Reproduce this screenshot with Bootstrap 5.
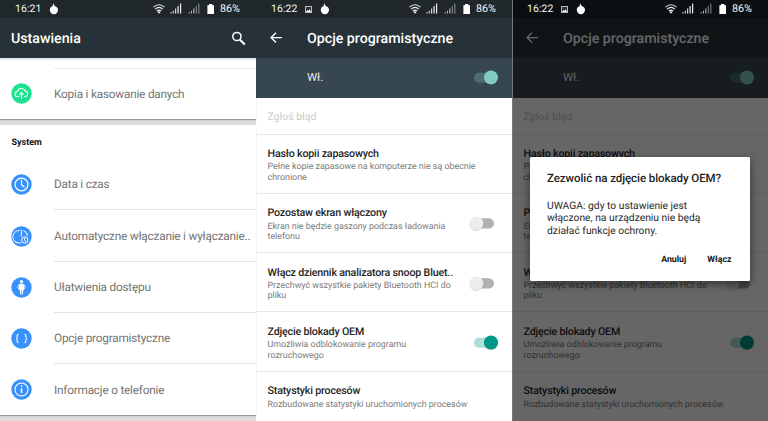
<!DOCTYPE html>
<html lang="pl">
<head>
<meta charset="utf-8">
<meta name="viewport" content="width=device-width, initial-scale=1">
<title>Ustawienia</title>
<link href="https://cdn.jsdelivr.net/npm/bootstrap@5.3.0/dist/css/bootstrap.min.css" rel="stylesheet">
<style>
body{width:768px;height:421px;overflow:hidden;font-family:Roboto,"Noto Sans",sans-serif;line-height:1;background:#fff;text-rendering:geometricPrecision}
symbol{overflow:visible}
.phone{width:256px;height:421px;flex:none}
.statusbar{height:18px;background:#20272b;color:#f4f4f4;font-size:10.8px;padding-left:15px;padding-right:16px;z-index:3}
.statusbar svg{display:block;flex:none}
.statusbar span{padding-top:1px}
.clock{width:26px;font-size:10.5px;letter-spacing:.05px}
.appbar{height:40px;background:#263238;color:#fff;padding:0 10px 0 11px;font-weight:500;font-size:14.2px}
.appbar span{padding-top:2px}
.phone-options .appbar{padding-left:13px}
.back{margin-right:24px}
.cards{background:#dcdcda;flex:1}
.sheet{background:#fff;box-shadow:0 1px 1px rgba(0,0,0,.3)}
.sheet-top{height:61px;padding-top:8px;border-top:2px solid #e8e8e8}
.sheet-system{height:290px;margin-top:6px}
.heading{height:34.3px;padding:14px 0 0 11.5px;font-size:9px;font-weight:700;color:#111}
.item{height:51.2px;padding-left:11px;color:#757575;font-size:11.8px;letter-spacing:-.21px}
.item svg{width:21px;height:21px;flex:none;margin-right:22px}
.item div{height:100%;border-bottom:1px solid #e4e4e4;white-space:nowrap;padding-top:2px}
.item:last-child div{border:0}
.sheet-top .item div{border-top:1px solid #ececec;border-bottom:0}
.master{height:39.5px;background:#37474f;color:#e9ecee;padding:0 14px 0 51px;font-size:11.4px}
.pref{height:59.3px;border-bottom:1px solid #e9e9e9;padding:13.6px 14px 0 11.5px}
.pref-off{height:37px;color:#cacaca;font-size:10.4px;padding:14px 0 0 11.5px}
.pref-title{font-size:10.7px;font-weight:500;line-height:12px;color:#262626;white-space:nowrap;letter-spacing:-.19px}
.pref-desc{font-size:8.9px;line-height:10.4px;color:#7b7b7b;white-space:nowrap;margin-top:2.4px}
.switch{width:25px;height:15px;flex:none}
.pref .switch{margin-top:9px}
.scrim{inset:0;background:rgba(0,0,0,.6);border-left:1px solid #777;z-index:2}
.prompt{left:18px;top:157px;width:220px;height:124px;background:#fff;border-radius:1.5px;z-index:4;padding:14px 18.5px 0 17px;box-shadow:0 3px 8px rgba(0,0,0,.5);color:#2a2a2a}
.prompt-title{font-size:11.5px;font-weight:500;line-height:14px;white-space:nowrap;color:#222;letter-spacing:-.07px}
.prompt-text{font-size:10.3px;line-height:12.3px;margin-top:15px;white-space:nowrap}
.prompt-actions{font-size:8.8px;font-weight:700;margin-top:19px;gap:21px;color:#151515}
.shade .statusbar{background:transparent}
</style>
<script src="https://cdn.jsdelivr.net/npm/bootstrap@5.3.0/dist/js/bootstrap.bundle.min.js"></script>
</head>
<body>
<svg width="0" height="0" class="position-absolute">
  <symbol id="drop" viewBox="0 0 10 12"><path d="M4 .3 5.7 2.9Q9 4 9 7.1A4.1 4.2 0 0 1 .8 7.1Q.8 4.2 3.7 3.1Z" fill="#fff"/></symbol>
  <symbol id="photo" viewBox="0 0 7 7"><rect x=".5" y=".5" width="6" height="6" fill="#333" stroke="#bbb"/><path d="m1 6 1.5-2 1 1 1.3-1.7L6 6Z" fill="#fff"/></symbol>
  <symbol id="signals" viewBox="0 0 63 12">
    <g fill="none" stroke="#eee" stroke-width="1.1"><path d="M.5 4.2Q6 -.7 11.5 4.2M2.1 6.1Q6 2.7 9.9 6.1M3.8 8Q6 6.2 8.2 8"/></g><path d="m4.5 9 1.5-1 1.5 1L6 10.7Z" fill="#eee"/>
    <g fill="#eee"><path d="M17.5 9h1v1.6h-1zM19.8 7.7h1v2.9h-1zM22.1 5.5h1.1v5.1h-1.1zM24.5 3h1.2v7.6h-1.2zM27 .5h1.2v10.1H27z"/></g>
    <g fill="#bbb"><path d="M35.7 9h1v1.6h-1zM38 7.7h1v2.9h-1zM40.3 5.5h1.1v5.1h-1.1z"/><path opacity=".6" d="M42.7 3h1.2v7.6h-1.2zM45.2 .5h1.2v10.1h-1.2z"/></g>
    <path fill="#fff" d="M54.4 2.2H56V1h3.3v1.2H61v8.8h-6.6z"/>
  </symbol>
  <symbol id="sw-on" viewBox="0 0 25 15"><rect x="1" y="2.7" width="20" height="10" rx="5" fill="#aadfda"/><circle cx="18" cy="8.2" r="7" fill="#000" opacity=".16"/><circle cx="18" cy="7.5" r="7" fill="#009688"/></symbol>
  <symbol id="sw-light" viewBox="0 0 25 15"><rect x="1" y="2.7" width="20" height="10" rx="5" fill="#4b6c70"/><circle cx="18" cy="8.2" r="7" fill="#000" opacity=".16"/><circle cx="18" cy="7.5" r="7" fill="#80cbc4"/></symbol>
  <symbol id="sw-off" viewBox="0 0 25 15"><rect x="1" y="2.2" width="20" height="10.4" rx="5.2" fill="#b0b0b0"/><circle cx="3.5" cy="8" r="7" fill="#000" opacity=".16"/><circle cx="3.5" cy="7.4" r="6.9" fill="#ececec"/></symbol>
</svg>

<main class="d-flex">
  <section class="phone d-flex flex-column">
    <div class="statusbar d-flex align-items-center">
      <span class="clock">16:21</span>
      <svg class="ms-2" width="10" height="12"><use href="#drop"/></svg>
      <svg class="ms-auto" width="63" height="12"><use href="#signals"/></svg>
      <span class="ms-1">86%</span>
    </div>
    <header class="appbar d-flex align-items-center justify-content-between">
      <span>Ustawienia</span>
      <svg width="15" height="15" viewBox="0 0 15 15" fill="none" stroke="#fff"><circle cx="5.9" cy="5.5" r="4.1" stroke-width="1.5"/><path d="m9 8.7 4.8 4.8" stroke-width="2"/></svg>
    </header>
    <div class="cards">
      <div class="sheet sheet-top">
        <div class="item d-flex align-items-center">
          <svg viewBox="0 0 21 21"><circle cx="10.5" cy="10.5" r="10.2" fill="#1de28e"/><g fill="none" stroke="#fff" stroke-width="1.1"><path d="M8.2 13.7H6.6a2.5 2.5 0 0 1-.2-5 4.2 4.2 0 0 1 7.9-.8 3 3 0 0 1 .2 5.8h-1.6M10.5 15.8V9.6M8.4 11.6l2.1-2.1 2.1 2.1"/></g></svg>
          <div class="d-flex align-items-center flex-fill">Kopia i kasowanie danych</div>
        </div>
      </div>
      <div class="sheet sheet-system">
        <div class="heading">System</div>
        <div class="item d-flex align-items-center">
          <svg viewBox="0 0 21 21"><circle cx="10.5" cy="10.5" r="10.2" fill="#3991fc"/><g fill="none" stroke="#fff" stroke-width="1.2"><circle cx="10.5" cy="10.5" r="6.4"/><path d="M10.5 5.8v5l3 2.4"/></g></svg>
          <div class="d-flex align-items-center flex-fill">Data i czas</div>
        </div>
        <div class="item d-flex align-items-center">
          <svg viewBox="0 0 21 21"><circle cx="10.5" cy="10.5" r="10.2" fill="#3991fc"/><g fill="none" stroke="#fff"><path d="M8.3 4.5A6.3 6.3 0 1 0 10.3 16.7M12.3 4.5a6.3 6.3 0 0 1 4.2 5.5M10.3 3.5v7.3"/><circle cx="13.8" cy="14" r="3.1"/><path d="M13.5 12v2.2l1.5 1.1"/></g></svg>
          <div class="d-flex align-items-center flex-fill">Automatyczne włączanie i wyłączanie..</div>
        </div>
        <div class="item d-flex align-items-center">
          <svg viewBox="0 0 21 21"><circle cx="10.5" cy="10.5" r="10.2" fill="#3991fc"/><circle cx="10.5" cy="4.6" r="1.6" fill="#fff"/><path d="M8.4 6.8h4.2l.7 6h-1l-.4 4.7h-1l-.2-4.2h-.4l-.2 4.2h-1l-.4-4.7h-1Z" fill="#fff"/><path d="M8.4 7.2 6.6 9.9l1.2 2M12.6 7.2l1.8 2.7-1.2 2" fill="none" stroke="#fff" stroke-width=".9"/></svg>
          <div class="d-flex align-items-center flex-fill">Ułatwienia dostępu</div>
        </div>
        <div class="item d-flex align-items-center">
          <svg viewBox="0 0 21 21"><circle cx="10.5" cy="10.5" r="10.2" fill="#3991fc"/><path d="M7.6 6.2q-1.5 0-1.5 1.5v1.4q0 1.4-1 1.4 1 0 1 1.4v1.4q0 1.5 1.5 1.5M13.4 6.2q1.5 0 1.5 1.5v1.4q0 1.4 1 1.4-1 0-1 1.4v1.4q0 1.5-1.5 1.5" fill="none" stroke="#fff" stroke-width="1.1"/></svg>
          <div class="d-flex align-items-center flex-fill">Opcje programistyczne</div>
        </div>
        <div class="item d-flex align-items-center">
          <svg viewBox="0 0 21 21"><circle cx="10.5" cy="10.5" r="10.2" fill="#3991fc"/><circle cx="10.5" cy="10.5" r="6.5" fill="none" stroke="#fff" stroke-width="1.1"/><path d="M9.8 6.6h1.4v1.5H9.8zM9.8 9.2h1.4v5H9.8z" fill="#fff"/></svg>
          <div class="d-flex align-items-center flex-fill">Informacje o telefonie</div>
        </div>
      </div>
    </div>
  </section>

  <section class="phone phone-options position-relative" id="options">
    <div class="statusbar d-flex align-items-center position-relative">
      <span class="clock">16:22</span>
      <svg class="ms-2" width="7" height="7"><use href="#photo"/></svg>
      <svg class="ms-2" width="10" height="12"><use href="#drop"/></svg>
      <svg class="ms-auto" width="63" height="12"><use href="#signals"/></svg>
      <span class="ms-1">86%</span>
    </div>
    <header class="appbar d-flex align-items-center">
      <svg class="back" width="14" height="14" viewBox="0 0 14 14" fill="none" stroke="#fff" stroke-width="1.4"><path d="M13 6.6H2.2M7 1.7 2.1 6.6 7 11.5"/></svg>
      <span>Opcje programistyczne</span>
    </header>
    <div class="master d-flex align-items-center justify-content-between">
      <span>Wł.</span><svg class="switch"><use href="#sw-light"/></svg>
    </div>
    <div class="pref pref-off">Zgłoś błąd</div>
    <div class="pref"><div class="pref-title">Hasło kopii zapasowych</div><div class="pref-desc">Pełne kopie zapasowe na komputerze nie są obecnie<br>chronione</div></div>
    <div class="pref d-flex justify-content-between">
      <div><div class="pref-title">Pozostaw ekran włączony</div><div class="pref-desc">Ekran nie będzie gaszony podczas ładowania<br>telefonu</div></div>
      <svg class="switch overflow-visible"><use href="#sw-off"/></svg>
    </div>
    <div class="pref d-flex justify-content-between">
      <div><div class="pref-title">Włącz dziennik analizatora snoop Bluet..</div><div class="pref-desc">Przechwyć wszystkie pakiety Bluetooth HCI do<br>pliku</div></div>
      <svg class="switch overflow-visible"><use href="#sw-off"/></svg>
    </div>
    <div class="pref d-flex justify-content-between">
      <div><div class="pref-title">Zdjęcie blokady OEM</div><div class="pref-desc">Umożliwia odblokowanie programu<br>rozruchowego</div></div>
      <svg class="switch"><use href="#sw-on"/></svg>
    </div>
    <div class="pref pref-last"><div class="pref-title">Statystyki procesów</div><div class="pref-desc">Rozbudowane statystyki uruchomionych procesów</div></div>
  </section>

  <section class="phone position-relative overflow-hidden" id="dimmed">
    <div class="prompt position-absolute">
      <div class="prompt-title">Zezwolić na zdjęcie blokady OEM?</div>
      <div class="prompt-text">UWAGA: gdy to ustawienie jest<br>włączone, na urządzeniu nie będą<br>działać funkcje ochrony.</div>
      <div class="prompt-actions d-flex justify-content-end"><span>Anuluj</span><span>Włącz</span></div>
    </div>
  </section>
</main>
<script>
// The third screen shows the same settings list behind a scrim and a dialog.
const dimmed = document.getElementById('dimmed');
const copy = document.getElementById('options').cloneNode(true);
copy.removeAttribute('id');
copy.classList.add('shade');
const scrim = document.createElement('div');
scrim.className = 'scrim position-absolute';
copy.append(scrim);
copy.style.background = 'linear-gradient(#20272b 18px,#fff 18px)';
dimmed.prepend(copy);
</script>
</body>
</html>
